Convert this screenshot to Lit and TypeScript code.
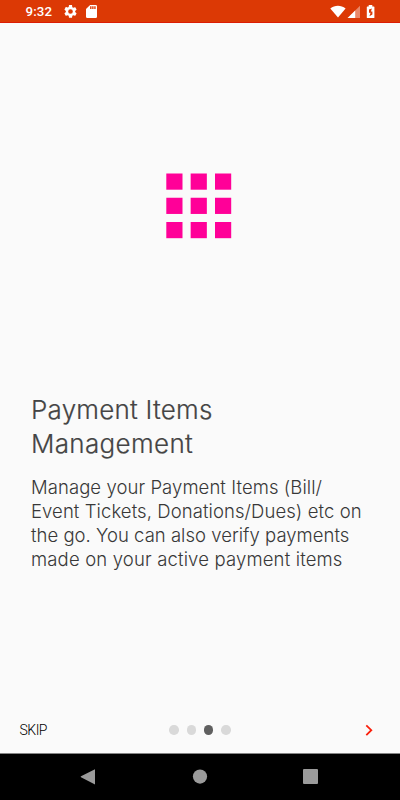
import { LitElement, html, svg, css } from "lit";
import { customElement, state } from "lit/decorators.js";
import { classMap } from "lit/directives/class-map.js";

@customElement("status-bar")
class StatusBar extends LitElement {
  static styles = css`
    :host { display: flex; align-items: center; height: 22px; flex: none; background: #dc3905; border-bottom: 1px solid #dc1c04; color: #fff; padding: 0 24px 0 25.5px; font: 500 13.3px/22px Roboto, sans-serif; letter-spacing: .1px; }
    .time { width: 38px; padding-top: 2px; }
    svg { display: block; fill: currentColor; }
    .gear { margin: 1px 9px 0 0; }
    .card { margin-top: 1px; }
    .right { margin: 2px 0 0 auto; }
  `;
  render() {
    return html`
      <span class="time">9:32</span>
      <svg class="gear" width="13" height="13" viewBox="2 2 20 20"><path d="M19.14 12.94c.04-.3.06-.61.06-.94s-.02-.64-.07-.94l2.03-1.58a.5.5 0 0 0 .12-.61l-1.92-3.32a.5.5 0 0 0-.59-.22l-2.39.96a7 7 0 0 0-1.62-.94l-.36-2.54A.5.5 0 0 0 13.92 2h-3.84a.5.5 0 0 0-.47.41l-.36 2.54c-.59.24-1.13.57-1.62.94l-2.39-.96a.5.5 0 0 0-.59.22L2.74 8.87a.5.5 0 0 0 .12.61l2.03 1.58a7 7 0 0 0 0 1.88l-2.03 1.58a.5.5 0 0 0-.12.61l1.92 3.32c.12.22.37.29.59.22l2.39-.96c.5.38 1.03.7 1.62.94l.36 2.54c.05.24.24.41.48.41h3.84a.5.5 0 0 0 .47-.41l.36-2.54c.59-.24 1.13-.56 1.62-.94l2.39.96c.22.08.47 0 .59-.22l1.92-3.32a.5.5 0 0 0-.12-.61zM12 15.6a3.6 3.6 0 1 1 0-7.2 3.6 3.6 0 0 1 0 7.2z"/></svg>
      <svg class="card" width="11" height="13" viewBox="4 2 16 20" preserveAspectRatio="none"><path d="M18 2h-8L4.02 8 4 20a2 2 0 0 0 2 2h12a2 2 0 0 0 2-2V4a2 2 0 0 0-2-2zm-6 6h-2V4h2zm3 0h-2V4h2zm3 0h-2V4h2z"/></svg>
      <svg class="right" width="46" height="14" viewBox="330 5 46 14">
        <path d="M330.3 8.6C334.8 4.9 341 4.9 345.6 8.6L338 17.6z"/>
        <path d="M360 5.7V18H347.6z" opacity=".4"/>
        <path d="M355.2 10.5V18H347.6z"/>
        <path fill-rule="evenodd" d="M368.7 5h3.6v1.4h1.5q.6 0 .6.6v10.4q0 .6-.6.6h-6.4q-.6 0-.6-.6V7q0-.6.6-.6h1.3zM371.9 8.4l-2.9 1.2v3.2h1.6l-1.2 3.4 3-1.6v-3h-1.5z"/>
      </svg>`;
  }
}

@customElement("nav-bar")
class NavBar extends LitElement {
  static styles = css`
    :host { display: block; flex: none; height: 46px; background: #000; border-top: 1px solid #858585; }
    svg { display: block; fill: #9b9b9b; }
  `;
  render() {
    return html`<svg width="400" height="46" viewBox="0 754 400 46">
      <path d="M95 769.2v15.4L81 777.3q-.7-.5 0-1z"/>
      <circle cx="200" cy="776.6" r="7.1"/>
      <rect x="303" y="769" width="15" height="15" rx="1"/>
    </svg>`;
  }
}

@customElement("app-root")
class AppRoot extends LitElement {
  static styles = css`
    :host { display: flex; flex-direction: column; width: 400px; height: 800px; background: #fafafa; overflow: hidden; }
    main { flex: 1; display: flex; flex-direction: column; }
    .art { display: block; margin: 150px 0 0 166px; fill: #ff0098; }
    h1, p { margin: 0 0 0 31px; white-space: nowrap; font-family: Inter, sans-serif; font-weight: 300; }
    h1 { margin-top: 153.5px; font-size: 26px; line-height: 34px; color: #444; -webkit-text-stroke: .2px #444; }
    p { margin-top: 14.2px; font-size: 18.5px; line-height: 24.1px; color: #383838; }
    span { display: block; width: max-content; }
    .t1 { letter-spacing: .22px; }
    .t2 { letter-spacing: .33px; }
    .b1 { letter-spacing: .07px; }
    .b2 { letter-spacing: .08px; }
    .b3 { letter-spacing: .02px; }
    .b4 { letter-spacing: .16px; }
    footer { flex: none; display: grid; grid-template-columns: 1fr auto 1fr; align-items: center; height: 47px; padding: 0 26px 0 19.5px; }
    .skip { font: 300 14px Roboto, sans-serif; color: #000; letter-spacing: -.5px; padding-top: 1px; }
    .dots { display: flex; gap: 7.7px; margin-left: 6.5px; padding-top: 1px; }
    .dot { width: 9.5px; height: 9.5px; border-radius: 50%; background: #d9d9d9; }
    .on { background: #5f5f5f; }
    .next { justify-self: end; fill: none; stroke: #fa1e0a; stroke-width: 1.8; }
  `;
  @state() page = 2;
  render() {
    return html`
      <status-bar></status-bar>
      <main>
        <svg class="art" width="66" height="66" viewBox="166 173 66 66">
          ${[0, 1, 2].map((r) => [0, 1, 2].map((c) => this.tile(r, c)))}
        </svg>
        <h1><span class="t1">Payment Items</span><span class="t2">Management</span></h1>
        <p>
          <span class="b1">Manage your Payment Items (Bill/</span>
          <span class="b2">Event Tickets, Donations/Dues) etc on</span>
          <span class="b3">the go. You can also verify payments</span>
          <span class="b4">made on your active payment items</span>
        </p>
      </main>
      <footer>
        <span class="skip">SKIP</span>
        <div class="dots">${[0, 1, 2, 3].map((i) => html`<i class=${classMap({ dot: true, on: i === this.page })}></i>`)}</div>
        <svg class="next" width="10" height="12" viewBox="364 724 10 12"><path d="M366.3 725.3l5 4.9-5 4.9"/></svg>
      </footer>
      <nav-bar></nav-bar>`;
  }
  private tile(row: number, col: number) {
    return svg`<rect x=${166.3 + col * 24.35} y=${173.5 + row * 24.25} width="16.2" height="16.2"/>`;
  }
}
